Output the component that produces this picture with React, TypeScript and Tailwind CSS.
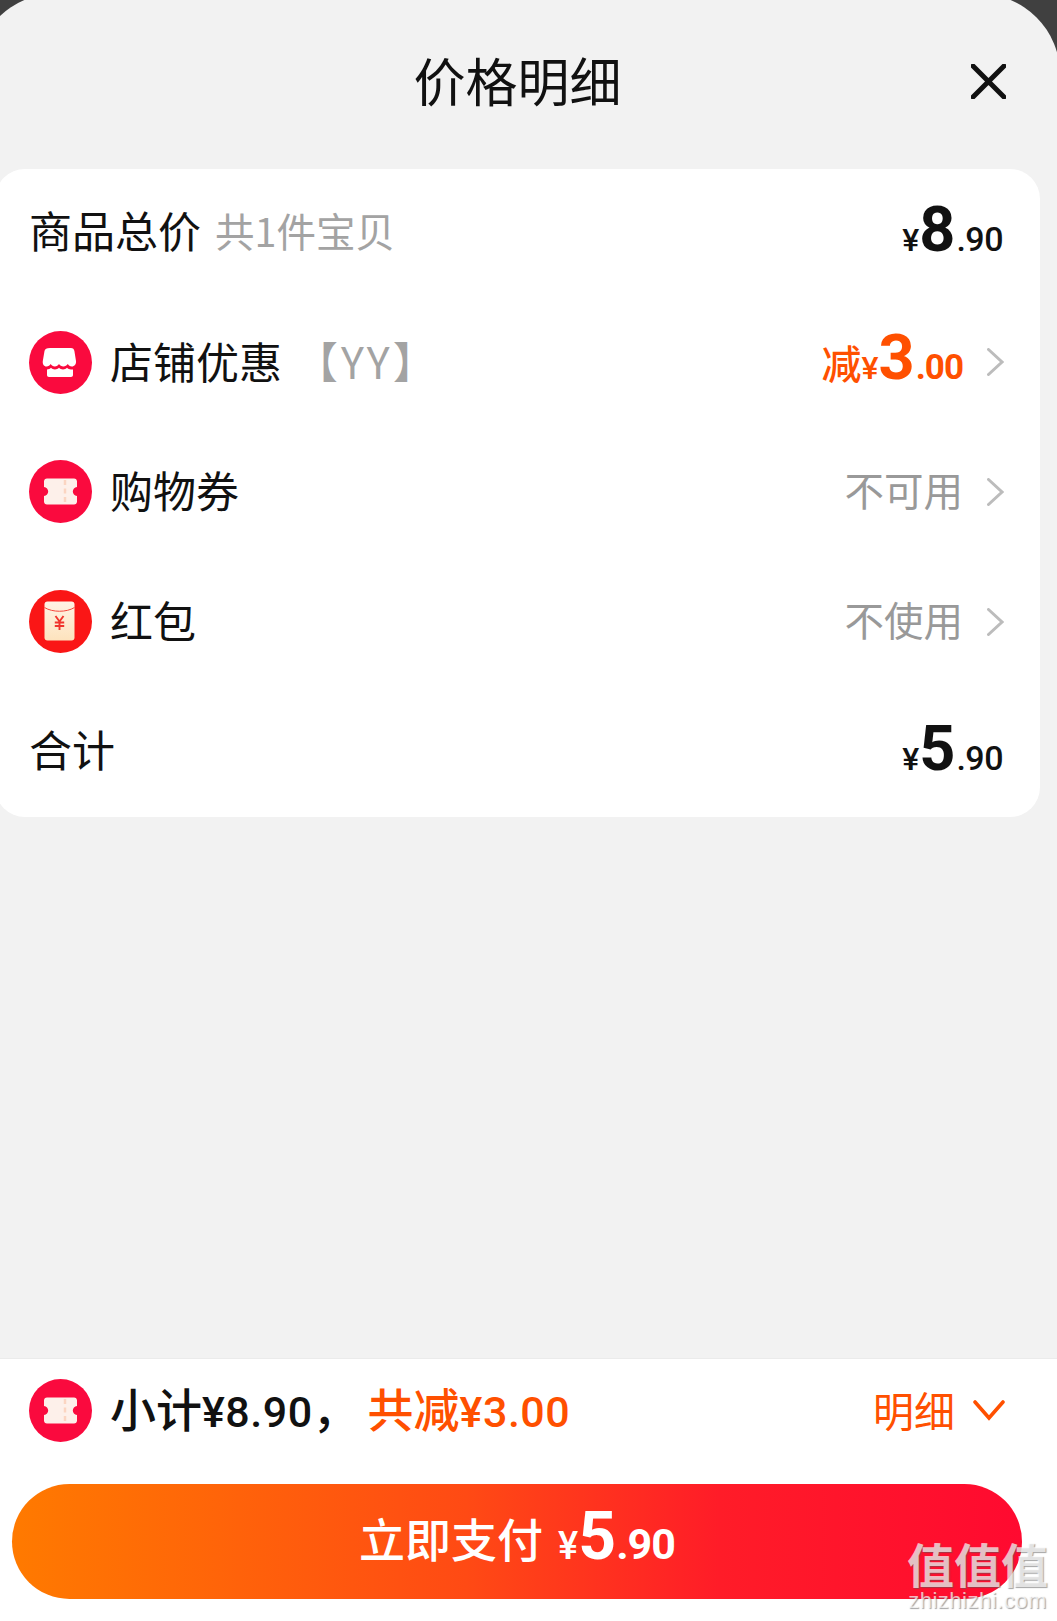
const cjk = "font-['Noto_Sans_CJK_SC','Noto_Sans',sans-serif]"
const digits = "font-['Roboto','Noto_Sans_CJK_SC',sans-serif]"

function ShopIcon() {
  return (
    <svg viewBox="0 0 63 63" className="h-[63px] w-[63px] shrink-0">
      <circle cx="31.5" cy="31.5" r="31.5" fill="#fa0a3e" />
      <path
        d="M21 17h21c2 0 3 1 3.400 3l1.600 10c.4 3-1.500 5.500-4.200 5.500-2 0-3-1-4-2.500-1 1.500-2.700 2.500-4.400 2.500S30.800 34.500 30 33c-1 1.500-2.400 2.500-4.200 2.500-1.700 0-3.200-1-4.100-2.500-1 1.500-2.200 2.500-4.200 2.500-2.700 0-4.100-2.500-3.700-5.500L15.500 20c.4-2 2-3 5.500-3z"
        fill="#fff"
      />
      <path
        d="M18 38.500c1.600 0 3-.7 4-1.700 1 1 2.400 1.700 3.900 1.700 1.600 0 3-.7 4.100-1.700 1 1 2.500 1.700 4 1.700s3-.7 4-1.700c1 1 2.400 1.700 4 1.700h2v5.500c0 1.200-.8 2-2 2H20c-1.200 0-2-.8-2-2z"
        fill="#fff"
      />
    </svg>
  )
}

function TicketIcon() {
  return (
    <svg viewBox="0 0 63 63" className="h-[63px] w-[63px] shrink-0">
      <circle cx="31.500" cy="31.500" r="31.500" fill="#fa0a3e" />
      <path
        d="M18 18.500h27c1.700 0 3 1.300 3 3v5.500c-2.500.5-4.200 2.300-4.200 4.500s1.700 4 4.200 4.500v5.500c0 1.700-1.300 3-3 3H18c-1.700 0-3-1.300-3-3V36c2.500-.5 4.200-2.300 4.200-4.500S17.500 27.500 15 27v-5.500c0-1.700 1.300-3 3-3z"
        fill="#fdf0ea"
      />
      <path d="M36 20v24" stroke="#fbd5c2" strokeWidth="2.500" strokeDasharray="5 3.500" />
    </svg>
  )
}

function PacketIcon() {
  return (
    <svg viewBox="0 0 63 63" className="h-[63px] w-[63px] shrink-0">
      <defs>
        <linearGradient id="packet" x1="0" y1="0" x2="0" y2="1">
          <stop offset="0" stopColor="#fff3e6" />
          <stop offset="1" stopColor="#fde3bd" />
        </linearGradient>
      </defs>
      <circle cx="31.500" cy="31.500" r="31.500" fill="#fa1616" />
      <rect x="15.500" y="11.500" width="30" height="39" rx="3" fill="url(#packet)" />
      <path d="M15.500 17.500c8 5 22 5 30 0" stroke="#f5463c" strokeWidth="1" fill="none" />
      <path
        d="M26.500 26l4 5.500 4-5.500M25.800 32.500h9.400M25.800 36h9.400M30.500 31.500V40"
        stroke="#f0342c"
        strokeWidth="1.900"
        fill="none"
      />
    </svg>
  )
}

function Chevron() {
  return (
    <svg viewBox="0 0 17 28" className="ml-[24px] h-[28px] w-[17px] shrink-0">
      <path d="M1.500 1.500L15 14 1.500 26.500" stroke="#bcbcbc" strokeWidth="3" fill="none" strokeLinecap="round" />
    </svg>
  )
}

function Price({ big, cents }: { big: string; cents: string }) {
  return (
    <div className={`${digits} flex items-baseline pr-[1px] text-[#111]`}>
      <span className="text-[32px] font-medium leading-none">¥</span>
      <span className="text-[63px] font-bold leading-none">{big}</span>
      <span className="ml-[1px] text-[34px] font-medium leading-none tracking-[-0.5px]">.{cents}</span>
    </div>
  )
}

function Row({ icon, label, children }: { icon: React.ReactNode; label: React.ReactNode; children: React.ReactNode }) {
  return (
    <div className="flex h-[129.6px] items-center pr-[36px] pb-[2px] pl-[34px]">
      {icon}
      <div className="ml-[18px] flex-1 pb-[4px] text-[43px] leading-none text-[#111]">{label}</div>
      {children}
    </div>
  )
}

export default function App() {
  return (
    <div className={`${cjk} relative h-[1621px] w-[1057px] overflow-hidden bg-[#404040]`}>
      <div className="-mt-[6px] -ml-[25px] flex h-[1627px] w-[1085px] flex-col rounded-t-[80px] bg-[#f2f2f2]">
        <div className="flex h-[175px] shrink-0 items-center pb-[4px]">
          <div className="flex-1" />
          <div className="text-[52px] leading-none text-[#111]">价格明细</div>
          <div className="flex flex-1 justify-end">
            <svg viewBox="0 0 35 35" className="mr-[54px] mt-[4px] h-[35px] w-[35px]">
              <path d="M2 2l31 31M33 2L2 33" stroke="#111" strokeWidth="5" strokeLinecap="round" />
            </svg>
          </div>
        </div>

        <div className="ml-[20px] h-[648px] w-[1045px] shrink-0 rounded-[30px] bg-white">
          <div className="flex h-[129.6px] items-center pr-[36px] pb-[8px] pl-[34px]">
            <span className="text-[43px] leading-none text-[#111]">商品总价</span>
            <span className="ml-[14px] flex-1 text-[39.5px] leading-none text-[#a3a3a3]">共1件宝贝</span>
            <Price big="8" cents="90" />
          </div>

          <Row
            icon={<ShopIcon />}
            label={
              <span>
                店铺优惠
                <span className="ml-[13px] tracking-[3px] text-[#a3a3a3]">【YY】</span>
              </span>
            }
          >
            <div className={`${digits} flex items-baseline pb-[10px] text-[#ff5000]`}>
              <span className={`${cjk} text-[40px] font-medium leading-none`}>减</span>
              <span className="text-[32px] font-medium leading-none">¥</span>
              <span className="text-[63px] font-bold leading-none">3</span>
              <span className="ml-[1px] text-[35px] font-bold leading-none tracking-[-1px]">.00</span>
            </div>
            <Chevron />
          </Row>

          <Row icon={<TicketIcon />} label="购物券">
            <span className="pb-[6px] text-[39.5px] leading-none text-[#999]">不可用</span>
            <Chevron />
          </Row>

          <Row icon={<PacketIcon />} label="红包">
            <span className="pb-[6px] text-[39.5px] leading-none text-[#999]">不使用</span>
            <Chevron />
          </Row>

          <div className="flex h-[129.6px] items-center pr-[36px] pb-[8px] pl-[34px]">
            <span className="flex-1 text-[43px] leading-none text-[#111]">合计</span>
            <Price big="5" cents="90" />
          </div>
        </div>

        <div className="flex-1" />

        <div className="h-[263px] shrink-0 border-t border-[#ebebeb] bg-white">
          <div className="flex h-[103px] items-center pr-[55px] pl-[54px]">
            <TicketIcon />
            <div className="ml-[18px] flex flex-1 items-baseline pb-[4px] text-[46px] font-medium leading-none">
              <span className="text-[#111]">
                小计<span className={`${digits} text-[43px] tracking-[0.5px]`}>¥8.90</span>，
              </span>
              <span className="ml-[9px] text-[#ff5000]">
                共减<span className={`${digits} text-[43px] tracking-[0.5px]`}>¥3.00</span>
              </span>
            </div>
            <span className="pb-[2px] text-[41px] leading-none text-[#ff5000]">明细</span>
            <svg viewBox="0 0 32 21" className="ml-[18px] h-[21px] w-[32px]">
              <path d="M2 2l14 16L30 2" stroke="#ff5000" strokeWidth="3.600" fill="none" strokeLinecap="round" />
            </svg>
          </div>
          <div className="mt-[22px] ml-[37px] flex h-[115px] w-[1010px] items-center justify-center rounded-full bg-[linear-gradient(90deg,#ff7a00,#ff4a14_45%,#ff1c28_70%,#ff0a30)] pb-[10px] text-white">
            <span className="text-[46px] font-medium leading-none">立即支付</span>
            <div className={`${digits} ml-[15px] flex items-baseline`}>
              <span className="text-[38px] font-medium leading-none">¥</span>
              <span className="text-[66px] font-bold leading-none">5</span>
              <span className="text-[43px] font-bold leading-none tracking-[-1px]">.90</span>
            </div>
          </div>
        </div>
      </div>

      <div className="absolute top-[1537px] left-[905px] flex w-[145px] flex-col items-center text-white/70 [text-shadow:1px_1px_1px_rgba(90,90,90,0.55)]">
        <span className="text-[47px] font-bold leading-[52px]">值值值</span>
        <span className="font-['Liberation_Sans',sans-serif] text-[22px] leading-[24px] tracking-[0.5px]">
          zhizhizhi.com
        </span>
      </div>
    </div>
  )
}
